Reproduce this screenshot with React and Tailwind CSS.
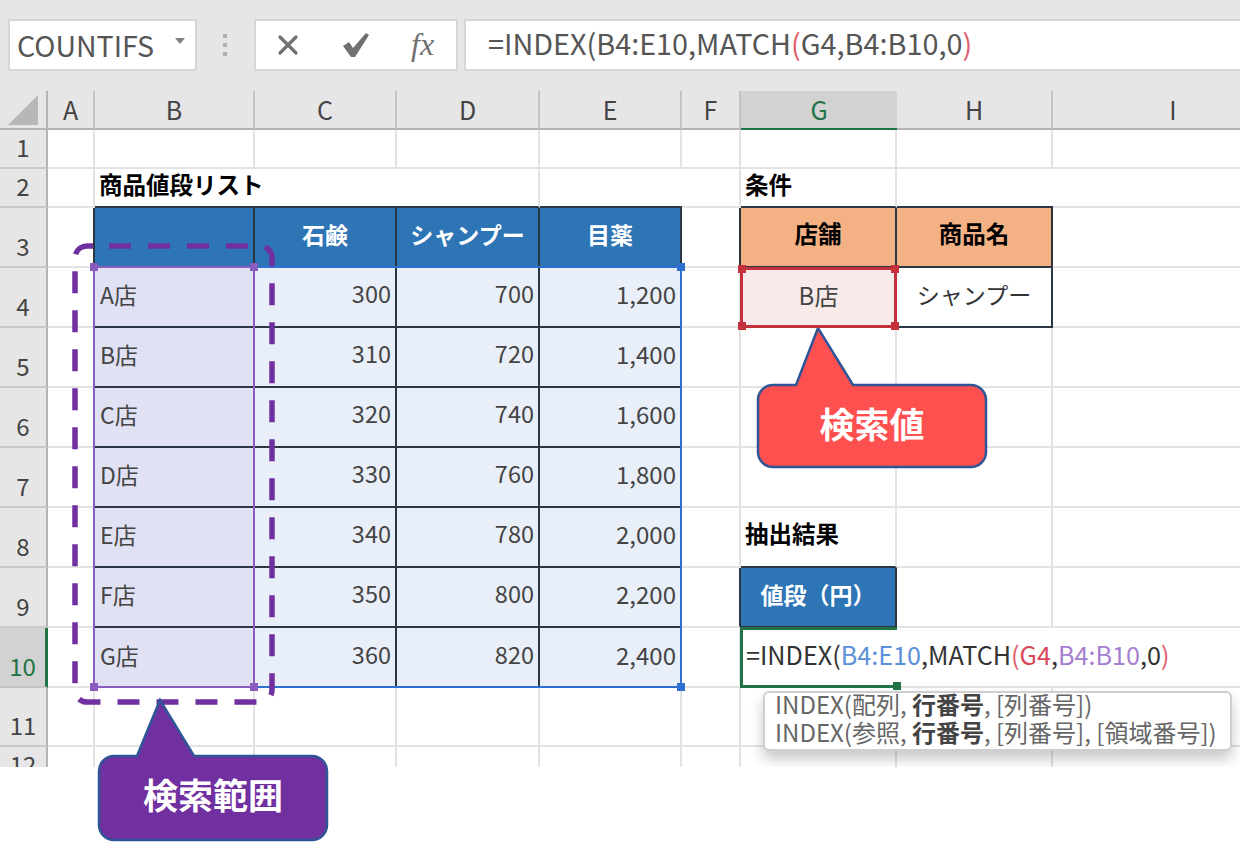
import { X } from "lucide-react";

const jp = "font-['Noto_Sans_CJK_JP','Noto_Sans',sans-serif]";
const columns = ["A", "B", "C", "D", "E", "F", "G", "H", "I"];
const rowNumbers = [1, 2, 3, 4, 5, 6, 7, 8, 9, 10, 11, 12];
const grid = "border-r-2 border-b-2 border-[#e3e3e3]";
const dark = "border-[#2b3642]";
const blueHead = `bg-[#2e75b6] border-r-2 border-b-2 ${dark} justify-center text-[23px] font-bold text-white`;
const orangeHead = `bg-[#f4b183] border-r-2 border-b-2 ${dark} justify-center text-[23.5px] font-bold text-black`;

const prices = [
  ["A店", "300", "700", "1,200"],
  ["B店", "310", "720", "1,400"],
  ["C店", "320", "740", "1,600"],
  ["D店", "330", "760", "1,800"],
  ["E店", "340", "780", "2,000"],
  ["F店", "350", "800", "2,200"],
  ["G店", "360", "820", "2,400"],
];

function Handle({ className }) {
  return <span className={`absolute h-2 w-2 ${className}`} />;
}

const cells = {
  B2: { text: "商品値段リスト", className: `border-b-2 ${dark} pl-1 text-[23.5px] font-bold text-black whitespace-nowrap` },
  C2: { className: `border-b-2 ${dark}` },
  D2: { className: `border-r-2 border-b-2 border-r-[#e3e3e3] ${dark}` },
  E2: { className: `border-b-2 ${dark}` },
  G2: { text: "条件", className: `border-r-2 border-b-2 border-r-[#e3e3e3] ${dark} pl-1 text-[23.5px] font-bold text-black` },
  H2: { className: `border-b-2 ${dark}` },
  A3: { className: `border-r-2 ${dark} border-b-2 border-b-[#e3e3e3]` },
  B3: { className: blueHead },
  C3: { text: "石鹸", className: blueHead },
  D3: { text: "シャンプー", className: blueHead },
  E3: { text: "目薬", className: blueHead },
  F3: { className: `border-r-2 ${dark} border-b-2 border-b-[#e3e3e3]` },
  G3: { text: "店舗", className: orangeHead },
  H3: { text: "商品名", className: orangeHead },
  G4: {
    text: "B店",
    className:
      "relative z-10 -ml-px -mt-px border-[3px] border-[#c5303d] bg-[#f9eaea] justify-center text-[24px] text-[#444]",
    children: (
      <>
        <Handle className="-left-[5px] -top-[5px] bg-[#c5303d]" />
        <Handle className="-right-[5px] -top-[5px] bg-[#c5303d]" />
        <Handle className="-left-[5px] -bottom-[5px] bg-[#c5303d]" />
        <Handle className="-right-[5px] -bottom-[5px] bg-[#c5303d]" />
      </>
    ),
  },
  H4: { text: "シャンプー", className: `border-r-2 border-b-2 ${dark} justify-center text-[23px] text-[#333]` },
  G8: { text: "抽出結果", className: `border-r-2 border-b-2 border-r-[#e3e3e3] ${dark} pl-1 text-[23.5px] font-bold text-black` },
  F9: { className: `border-r-2 ${dark} border-b-2 border-b-[#e3e3e3]` },
  G9: { text: "値段（円）", className: blueHead },
  G10: {
    text: (
      <span>
        =INDEX(<span className="text-[#5b8fd9]">B4:E10</span>,MATCH<span className="text-[#e0606e]">(</span>
        <span className="text-[#d9485a]">G4</span>,<span className="text-[#a67fd0]">B4:B10</span>,0
        <span className="text-[#e0606e]">)</span>
      </span>
    ),
    className:
      "relative z-10 -ml-px -mt-px border-[3px] border-r-0 border-[#217346] pl-[3px] text-[25.2px] text-[#333] whitespace-nowrap",
    children: <Handle className="-right-[4px] -bottom-[5px] bg-[#217346]" />,
  },
  H10: { className: "border-b-2 border-[#e3e3e3]" },
  I10: { className: "border-b-2 border-[#e3e3e3]" },
};

prices.forEach((row, i) => {
  const n = i + 4;
  const last = i === prices.length - 1;
  cells[`B${n}`] = {
    text: row[0],
    className: `bg-[#e0e1f2] ${last ? "" : `border-b-2 ${dark}`} pl-[5px] text-[23px] text-[#444]`,
  };
  cells[`C${n}`] = {
    text: row[1],
    className: `bg-[#e9eff9] border-r-2 ${last ? "" : "border-b-2"} ${dark} justify-end pr-1 text-[23.5px] text-[#444]`,
  };
  cells[`D${n}`] = {
    text: row[2],
    className: `bg-[#e9eff9] border-r-2 ${last ? "" : "border-b-2"} ${dark} justify-end pr-1 text-[23.5px] text-[#444]`,
  };
  cells[`E${n}`] = {
    text: row[3],
    className: `bg-[#e9eff9] ${last ? "" : `border-b-2 ${dark}`} justify-end pr-[6px] text-[24px] text-[#444]`,
  };
});

function Toolbar() {
  return (
    <div className="flex h-[91px] items-start bg-[#e6e6e6] pt-[19px]">
      <div className="ml-2 flex h-[52px] w-[189px] items-center justify-between border-2 border-[#d6d6d6] bg-white pl-[7px] pr-[10px] text-[28.5px] text-[#555]">
        <span>COUNTIFS</span>
        <svg width="10" height="6" viewBox="0 0 10 6" className="mb-[8px]">
          <path d="M0 0h10L5 6z" fill="#808080" />
        </svg>
      </div>
      <div className="flex h-[52px] w-[57px] flex-col items-center justify-center gap-[5px] pr-[2px]">
        <span className="h-1 w-1 bg-[#b0b0b0]" />
        <span className="h-1 w-1 bg-[#b0b0b0]" />
        <span className="h-1 w-1 bg-[#b0b0b0]" />
      </div>
      <div className="flex h-[52px] w-[204px] items-center border-2 border-[#d6d6d6] bg-white text-[#707070]">
        <X className="ml-[16px]" size={32} strokeWidth={2.4} />
        <svg className="ml-[38px]" width="28" height="26" viewBox="0 0 28 26">
          <path d="M1 14 L7 10 L11 16 L24 1 L27 3 L13 25 L9 25 Z" fill="#707070" />
        </svg>
        <span className="ml-[41px] pb-[3px] font-['Liberation_Serif',serif] text-[32px] italic">fx</span>
      </div>
      <div className="ml-[6px] flex h-[52px] flex-1 items-center border-2 border-r-0 border-[#d6d6d6] bg-white pb-1 pl-[22px] text-[28.8px] text-[#555]">
        <span>
          =INDEX(B4:E10,MATCH<span className="text-[#e0606e]">(</span>G4,B4:B10,0<span className="text-[#e0606e]">)</span>
        </span>
      </div>
    </div>
  );
}

function Row({ n }) {
  const active = n === 10;
  return (
    <>
      <div
        className={
          active
            ? "flex items-end justify-center border-r-[3px] border-b-2 border-r-[#217346] border-b-[#c4c4c4] bg-[#d2d2d2] text-[24px] leading-[40px] text-[#217346]"
            : "flex items-end justify-center border-r-2 border-b-2 border-r-[#b4b4b4] border-b-[#c8c8c8] bg-[#e6e6e6] text-[24px] leading-[40px] text-[#444]"
        }
      >
        {n}
      </div>
      {columns.map((c) => {
        const cell = cells[`${c}${n}`];
        return (
          <div key={c} className={`flex min-w-0 items-center pb-[6px] ${cell ? cell.className : grid}`}>
            {cell?.text}
            {cell?.children}
          </div>
        );
      })}
    </>
  );
}

function Sheet() {
  return (
    <div className="relative h-[676px] overflow-hidden">
      <div className="grid grid-cols-[48px_47px_160px_142px_143px_142px_59px_156px_156px_242px] grid-rows-[39px_39px_39px_60px_60px_60px_60px_60px_60px_60px_60px_59px_39px]">
        <div className="flex items-center justify-center border-r-2 border-b-2 border-[#b4b4b4] bg-[#e6e6e6]">
          <svg width="32" height="32" viewBox="0 0 32 32">
            <path d="M31 1v30H1z" fill="#b7b7b7" />
          </svg>
        </div>
        {columns.map((c) => (
          <div
            key={c}
            className={
              c === "G"
                ? "flex items-center justify-center border-b-2 border-[#217346] bg-[#d2d2d2] text-[25px] text-[#217346]"
                : "flex items-center justify-center border-r-2 border-b-2 border-r-[#c4c4c4] border-b-[#b4b4b4] bg-[#e6e6e6] text-[25px] text-[#444]"
            }
          >
            {c}
          </div>
        ))}
        {rowNumbers.map((n) => (
          <Row key={n} n={n} />
        ))}
      </div>

      {/* range outlines over the cells */}
      <div className="pointer-events-none absolute left-[253px] top-[175px] h-[422px] w-[429px] border-2 border-l-0 border-[#2f6fd0]">
        <Handle className="-right-[5px] -top-[5px] bg-[#2f6fd0]" />
        <Handle className="-right-[5px] -bottom-[5px] bg-[#2f6fd0]" />
      </div>
      <div className="pointer-events-none absolute left-[93px] top-[175px] h-[422px] w-[162px] border-2 border-[#8a5cc0]">
        <Handle className="-left-[5px] -top-[5px] bg-[#8a5cc0]" />
        <Handle className="-right-[5px] -top-[5px] bg-[#8a5cc0]" />
        <Handle className="-left-[5px] -bottom-[5px] bg-[#8a5cc0]" />
        <Handle className="-right-[5px] -bottom-[5px] bg-[#8a5cc0]" />
      </div>

      {/* function hint under the edited cell */}
      <div className="absolute left-[763px] top-[600px] flex h-[60px] w-[469px] flex-col gap-[6px] rounded-md border-2 border-[#cfcfcf] bg-white pl-[10px] text-[24px] leading-[22px] text-[#666] shadow-[0_8px_14px_rgba(0,0,0,0.22)] whitespace-nowrap">
        <div>
          INDEX(配列, <b className="text-[#444]">行番号</b>, [列番号])
        </div>
        <div>
          INDEX(参照, <b className="text-[#444]">行番号</b>, [列番号], [領域番号])
        </div>
      </div>
    </div>
  );
}

export default function App() {
  return (
    <div className={`relative h-[842px] w-[1240px] overflow-hidden bg-white ${jp}`}>
      <Toolbar />
      <Sheet />

      <svg className="pointer-events-none absolute inset-0" width="1240" height="842" viewBox="0 0 1240 842">
        <path
          d="M109 246 H260 A12 12 0 0 1 272 258 V690 A12 12 0 0 1 260 702 H87 A12 12 0 0 1 75 690 V258 A12 12 0 0 1 87 246 H93"
          fill="none"
          stroke="#7030a0"
          strokeWidth="5.5"
          strokeDasharray="22 17"
        />
        <path
          d="M796 385 L818 328 L853 385 H971 A15 15 0 0 1 986 400 V452 A15 15 0 0 1 971 467 H773 A15 15 0 0 1 758 452 V400 A15 15 0 0 1 773 385 Z"
          fill="#ff5050"
          stroke="#2f5597"
          strokeWidth="2.5"
        />
        <path
          d="M137 756 L160 700 L194 756 H312 A15 15 0 0 1 327 771 V825 A15 15 0 0 1 312 840 H114 A15 15 0 0 1 99 825 V771 A15 15 0 0 1 114 756 Z"
          fill="#7030a0"
          stroke="#2f5597"
          strokeWidth="2.5"
        />
      </svg>
      <div className="absolute left-[758px] top-[385px] flex h-[82px] w-[228px] items-center justify-center pb-[6px] text-[35px] font-bold text-white">
        検索値
      </div>
      <div className="absolute left-[99px] top-[756px] flex h-[84px] w-[228px] items-center justify-center pb-2 text-[35px] font-bold text-white">
        検索範囲
      </div>
    </div>
  );
}
